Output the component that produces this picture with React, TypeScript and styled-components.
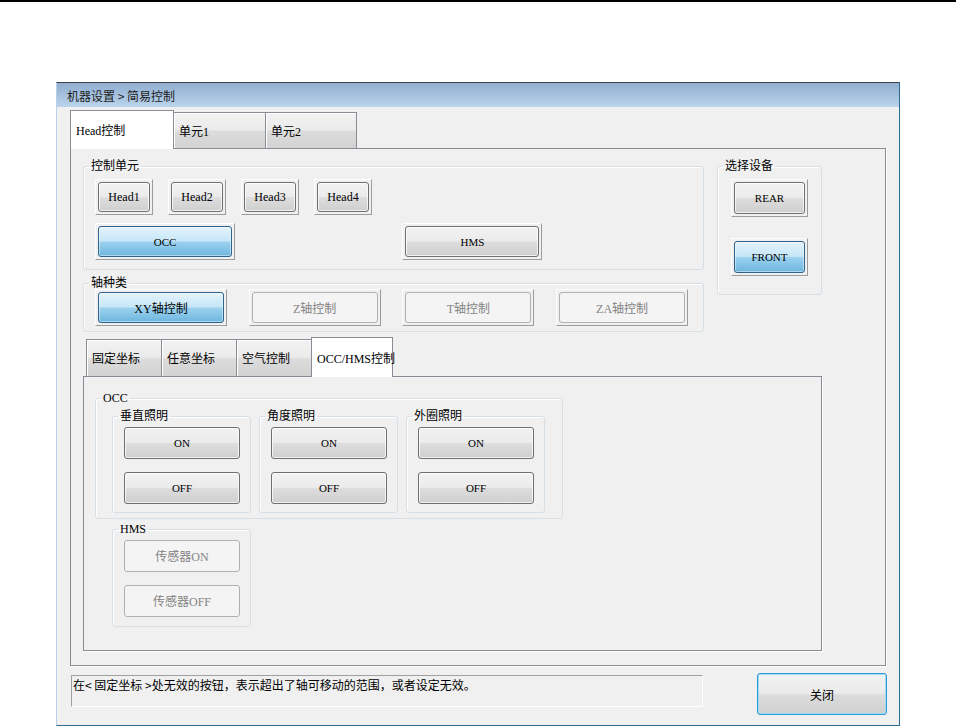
import { FC, ReactNode } from "react";
import styled, { createGlobalStyle, css } from "styled-components";

const GlobalStyle = createGlobalStyle`
  html, body {
    margin: 0;
    padding: 0;
    background: #fff;
  }
  body {
    font-family: "Liberation Serif", "Noto Sans CJK SC", serif;
    font-size: 12px;
    color: #000;
  }
  * {
    box-sizing: border-box;
  }
`;

const TopRule = styled.div`
  height: 2px;
  background: #000;
`;

const Window = styled.div`
  margin: 80px 0 0 56px;
  width: 844px;
  height: 644px;
  display: flex;
  flex-direction: column;
  background: #f0f0f0;
  border-top: 1px solid #404040;
  border-left: 1px solid #b9cfe6;
  border-right: 1px solid #2f6b90;
  border-bottom: 1px solid #2f6b90;
`;

const TitleBar = styled.div`
  flex: none;
  height: 24px;
  display: flex;
  align-items: center;
  padding-left: 10px;
  background: linear-gradient(#90aed0, #bbd4ec);
  color: #1c1c1c;
  font-family: "Noto Sans CJK SC", sans-serif;
  font-size: 12px;
  white-space: pre;
`;

const WindowBody = styled.div`
  flex: 1;
  display: flex;
  flex-direction: column;
  padding: 3px 13px 0 13px;
`;

const TabStrip = styled.div<{ $height: number; $indent?: number }>`
  flex: none;
  display: flex;
  align-items: flex-end;
  height: ${(p) => p.$height}px;
  padding-left: ${(p) => p.$indent ?? 0}px;
`;

const Tab = styled.div<{ $active?: boolean; $width: number; $height: number }>`
  width: ${(p) => p.$width}px;
  height: ${(p) => p.$height}px;
  display: flex;
  align-items: center;
  padding-left: 5px;
  border: 1px solid #898c95;
  border-bottom: none;
  font-size: 12px;
  white-space: nowrap;
  & + & {
    margin-left: -1px;
  }
  ${(p) =>
    p.$active
      ? css`
          position: relative;
          z-index: 1;
          margin-bottom: -1px;
          background: #fff;
        `
      : css`
          background: linear-gradient(
            #f2f2f2 0%,
            #ebebeb 48%,
            #dcdcdc 52%,
            #d2d2d2 100%
          );
          box-shadow: inset 1px 1px 0 #fff;
        `}
`;

const OuterPanel = styled.div`
  flex: none;
  height: 518px;
  display: flex;
  flex-direction: column;
  border: 1px solid #898c95;
  box-shadow: 1px 1px 0 #fff;
  padding: 11px 63px 14px 12px;
`;

const TopRow = styled.div`
  display: flex;
  gap: 13px;
  align-items: flex-start;
`;

const Column = styled.div`
  display: flex;
  flex-direction: column;
  gap: 7px;
`;

const Group = styled.fieldset<{ $width: number }>`
  margin: 0;
  padding: 0;
  min-width: 0;
  width: ${(p) => p.$width}px;
  border: 1px solid #d5dfe5;
  border-radius: 3px;
  box-shadow: inset 1px 1px 0 #fff;
`;

const Legend = styled.legend`
  margin-left: 5px;
  padding: 0 2px;
  font-size: 12px;
  line-height: 12px;
`;

const GroupBody = styled.div<{ $pad: string; $gap?: number }>`
  display: flex;
  flex-direction: column;
  align-items: flex-start;
  gap: ${(p) => p.$gap ?? 0}px;
  padding: ${(p) => p.$pad};
`;

const ButtonRow = styled.div<{ $gap: number }>`
  display: flex;
  gap: ${(p) => p.$gap}px;
`;

const ButtonGrid = styled.div`
  display: grid;
  grid-template-columns: repeat(4, 153.7px);
  align-items: start;
  justify-items: start;
`;

const Cell = styled.div<{ $col: number }>`
  grid-column: ${(p) => p.$col};
`;

type Tone = "normal" | "selected" | "disabled";

const Frame = styled.div`
  display: inline-flex;
  padding: 2px;
  border: 1px solid;
  border-color: #fdfdfd #9c9c9c #9c9c9c #fdfdfd;
  background: #f0f0f0;
`;

const Face = styled.div<{ $tone: Tone; $w: number; $h: number; $size?: number }>`
  width: ${(p) => p.$w}px;
  height: ${(p) => p.$h}px;
  display: flex;
  align-items: center;
  justify-content: center;
  border-radius: 3px;
  font-size: ${(p) => p.$size ?? 12}px;
  white-space: nowrap;
  ${(p) =>
    p.$tone === "selected"
      ? css`
          border: 1px solid #2c628b;
          background: linear-gradient(
            #e4f3fc 0%,
            #c6e6f7 48%,
            #9bd1ef 52%,
            #6db6de 100%
          );
          box-shadow: inset 0 0 0 1px rgba(255, 255, 255, 0.45);
          color: #000;
        `
      : p.$tone === "disabled"
      ? css`
          border: 1px solid #adb2b5;
          background: #f4f4f4;
          color: #838383;
        `
      : css`
          border: 1px solid #707070;
          background: linear-gradient(
            #f2f2f2 0%,
            #ebebeb 48%,
            #dddddd 52%,
            #cfcfcf 100%
          );
          box-shadow: inset 0 0 0 1px rgba(255, 255, 255, 0.7);
          color: #000;
        `}
`;

const Button: FC<{
  w: number;
  h: number;
  tone?: Tone;
  framed?: boolean;
  size?: number;
  children: ReactNode;
}> = ({ w, h, tone = "normal", framed, size, children }) => {
  if (!framed) {
    return (
      <Face $tone={tone} $w={w} $h={h} $size={size}>
        {children}
      </Face>
    );
  }
  return (
    <Frame>
      <Face $tone={tone} $w={w - 6} $h={h - 6} $size={size}>
        {children}
      </Face>
    </Frame>
  );
};

const InnerSection = styled.div`
  flex: 1;
  display: flex;
  flex-direction: column;
  margin-top: 5px;
`;

const InnerPanel = styled.div`
  flex: 1;
  display: flex;
  flex-direction: column;
  align-items: flex-start;
  border: 1px solid #898c95;
  box-shadow: 1px 1px 0 #fff;
  padding: 15px 0 0 11px;
`;

const SubGroups = styled.div`
  display: flex;
  gap: 8px;
`;

const Indented = styled.div`
  margin: 4px 0 0 17px;
`;

const StatusRow = styled.div`
  flex: none;
  display: flex;
  justify-content: space-between;
  align-items: flex-start;
  height: 42px;
  margin-top: 7px;
`;

const StatusBox = styled.div`
  width: 632px;
  height: 32px;
  margin: 2px 0 0 1px;
  padding: 2px 1px;
  border: 1px solid;
  border-color: #a0a0a0 #fff #fff #a0a0a0;
  font-family: "Noto Sans CJK SC", sans-serif;
  font-size: 12px;
  line-height: 14px;
  white-space: nowrap;
`;

const CloseButton = styled.div`
  width: 130px;
  height: 42px;
  margin-right: -1px;
  display: flex;
  align-items: center;
  justify-content: center;
  border: 1px solid #2b9ad6;
  border-radius: 3px;
  background: linear-gradient(
    #f2f2f2 0%,
    #ebebeb 48%,
    #dddddd 52%,
    #cfcfcf 100%
  );
  box-shadow: inset 0 0 0 1px #9fdaf6;
  font-family: "Noto Sans CJK SC", sans-serif;
  font-size: 12px;
`;

const LightGroup: FC<{ title: string }> = ({ title }) => (
  <Group $width={139}>
    <Legend>{title}</Legend>
    <GroupBody $pad="5px 0 8px 11px" $gap={13}>
      <Button w={116} h={32} size={11}>
        ON
      </Button>
      <Button w={116} h={32} size={11}>
        OFF
      </Button>
    </GroupBody>
  </Group>
);

const App: FC = () => (
  <>
    <GlobalStyle />
    <TopRule />
    <Window>
      <TitleBar>机器设置 &gt; 简易控制</TitleBar>
      <WindowBody>
        <TabStrip $height={38}>
          <Tab $active $width={104} $height={39}>
            Head控制
          </Tab>
          <Tab $width={93} $height={36}>
            单元1
          </Tab>
          <Tab $width={92} $height={36}>
            单元2
          </Tab>
        </TabStrip>
        <OuterPanel>
          <TopRow>
            <Column>
              <Group $width={621}>
                <Legend>控制单元</Legend>
                <GroupBody $pad="7px 0 9px 11px" $gap={8}>
                  <ButtonRow $gap={15}>
                    {["Head1", "Head2", "Head3", "Head4"].map((h) => (
                      <Button key={h} framed w={58} h={36}>
                        {h}
                      </Button>
                    ))}
                  </ButtonRow>
                  <ButtonGrid>
                    <Cell $col={1}>
                      <Button framed tone="selected" w={140} h={37} size={11}>
                        OCC
                      </Button>
                    </Cell>
                    <Cell $col={3}>
                      <Button framed w={140} h={37} size={11}>
                        HMS
                      </Button>
                    </Cell>
                  </ButtonGrid>
                </GroupBody>
              </Group>
              <Group $width={621}>
                <Legend>轴种类</Legend>
                <GroupBody $pad="0 0 5px 11px">
                  <ButtonGrid>
                    <Button framed tone="selected" w={132} h={37}>
                      XY轴控制
                    </Button>
                    <Button framed tone="disabled" w={132} h={37}>
                      Z轴控制
                    </Button>
                    <Button framed tone="disabled" w={132} h={37}>
                      T轴控制
                    </Button>
                    <Button framed tone="disabled" w={132} h={37}>
                      ZA轴控制
                    </Button>
                  </ButtonGrid>
                </GroupBody>
              </Group>
            </Column>
            <Group $width={106}>
              <Legend>选择设备</Legend>
              <GroupBody $pad="7px 0 18px 13px" $gap={21}>
                <Button framed w={77} h={38} size={11}>
                  REAR
                </Button>
                <Button framed tone="selected" w={77} h={38} size={11}>
                  FRONT
                </Button>
              </GroupBody>
            </Group>
          </TopRow>
          <InnerSection>
            <TabStrip $height={39} $indent={3}>
              <Tab $width={76} $height={37}>
                固定坐标
              </Tab>
              <Tab $width={76} $height={37}>
                任意坐标
              </Tab>
              <Tab $width={76} $height={37}>
                空气控制
              </Tab>
              <Tab $active $width={82} $height={40}>
                OCC/HMS控制
              </Tab>
            </TabStrip>
            <InnerPanel>
              <Group $width={468}>
                <Legend>OCC</Legend>
                <GroupBody $pad="6px 0 5px 16px">
                  <SubGroups>
                    <LightGroup title="垂直照明" />
                    <LightGroup title="角度照明" />
                    <LightGroup title="外圈照明" />
                  </SubGroups>
                </GroupBody>
              </Group>
              <Indented>
                <Group $width={139}>
                  <Legend>HMS</Legend>
                  <GroupBody $pad="5px 0 9px 11px" $gap={13}>
                    <Button tone="disabled" w={116} h={32}>
                      传感器ON
                    </Button>
                    <Button tone="disabled" w={116} h={32}>
                      传感器OFF
                    </Button>
                  </GroupBody>
                </Group>
              </Indented>
            </InnerPanel>
          </InnerSection>
        </OuterPanel>
        <StatusRow>
          <StatusBox>
            在&lt; 固定坐标 &gt;处无效的按钮，表示超出了轴可移动的范围，或者设定无效。
          </StatusBox>
          <CloseButton>关闭</CloseButton>
        </StatusRow>
      </WindowBody>
    </Window>
  </>
);

export default App;
